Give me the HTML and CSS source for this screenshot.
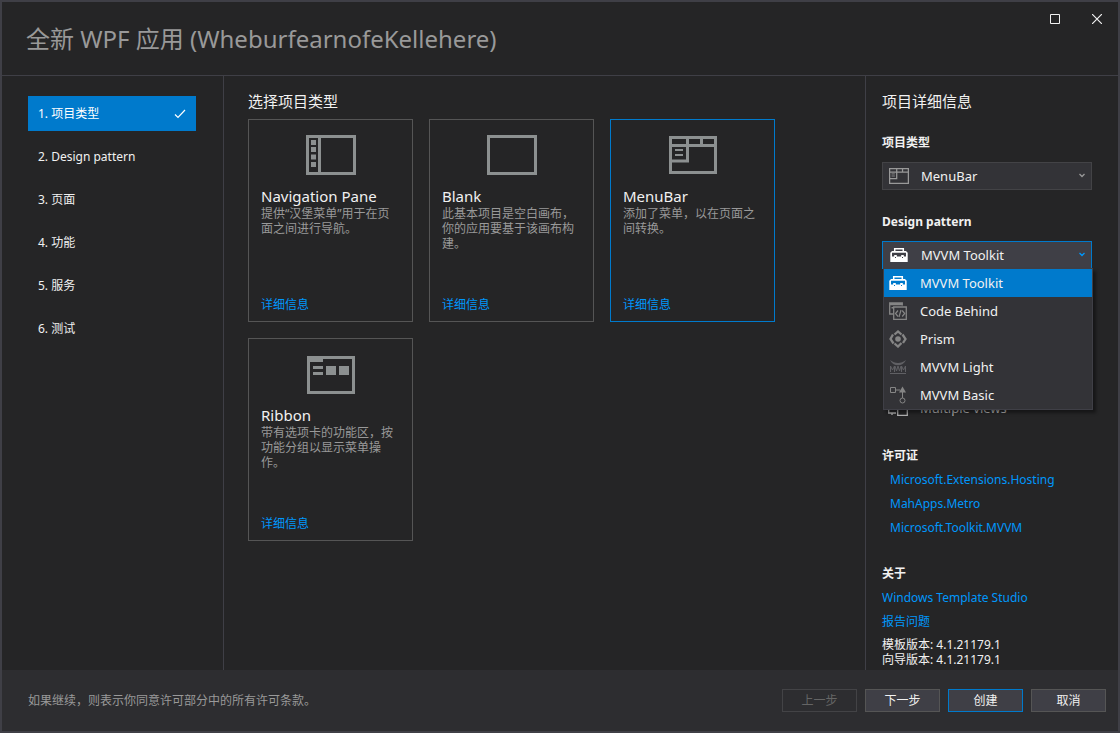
FILE: index.html
```html
<!DOCTYPE html>
<html lang="zh-CN">
<head>
<meta charset="utf-8">
<title>全新 WPF 应用</title>
<link rel="stylesheet" href="styles.css">
</head>
<body>
<svg class="sprite" aria-hidden="true">
  <symbol id="i-menubar" viewBox="0 0 48 38">
    <path d="M1.5 1.5h45v35h-45zM0 9.500h48M18.500 0v25H0M32.500 0v9" fill="none" stroke="currentColor" stroke-width="3"/>
    <path d="M6 14h8M6 19h8" stroke="currentColor" stroke-width="2"/>
  </symbol>
  <symbol id="i-toolkit" viewBox="0 0 18 16">
    <path d="M4.700 5V1.700h8.600V5" fill="none" stroke="currentColor" stroke-width="1.500"/>
    <path fill="currentColor" fill-rule="evenodd" d="M2 4h14l1.700 1.700V15H.300V5.700zM2 5.800v3.700h2.200V8h2.600v1.500h4.400V8h2.600v1.500H16V5.800zM5 10v1h1v-1zM12 10v1h1v-1z"/>
  </symbol>
</svg>
<div class="window">
  <header class="titlebar">
    <h1 class="title">全新 WPF 应用 (WheburfearnofeKellehere)</h1>
    <div class="window-buttons">
      <button class="window-button" type="button" aria-label="最大化"><svg width="10" height="10" viewBox="0 0 10 10"><path d="M.5.5h9v9h-9z" fill="none" stroke="currentColor"/></svg></button>
      <button class="window-button" type="button" aria-label="关闭"><svg width="10" height="10" viewBox="0 0 10 10"><path d="M0 0l10 10M10 0L0 10" fill="none" stroke="currentColor" stroke-width="1.2"/></svg></button>
    </div>
  </header>
  <div class="content">
    <nav class="steps">
      <a class="step step-active" href="#">1. 项目类型<svg width="12" height="10" viewBox="0 0 12 10"><path d="M1 5.500l3 3L11 1" fill="none" stroke="currentColor" stroke-width="1.2"/></svg></a>
      <a class="step" href="#">2. Design pattern</a>
      <a class="step" href="#">3. 页面</a>
      <a class="step" href="#">4. 功能</a>
      <a class="step" href="#">5. 服务</a>
      <a class="step" href="#">6. 测试</a>
    </nav>
    <main class="main">
      <h2 class="heading">选择项目类型</h2>
      <div class="cards">
        <article class="card">
          <svg class="card-icon" width="50" height="40" viewBox="0 0 50 40"><path d="M1.500 1.500h47v37h-47zM13.500 0v40" fill="none" stroke="currentColor" stroke-width="3"/><path d="M5 5h5v5H5zM5 12h5v5H5zM5 19.500h5v5H5zM5 27h5v5H5z" fill="currentColor"/></svg>
          <h3 class="card-title">Navigation Pane</h3>
          <p class="card-text">提供“汉堡菜单”用于在页面之间进行导航。</p>
          <a class="link" href="#">详细信息</a>
        </article>
        <article class="card">
          <svg class="card-icon" width="50" height="40" viewBox="0 0 50 40"><path d="M1.500 1.500h47v37h-47z" fill="none" stroke="currentColor" stroke-width="3"/></svg>
          <h3 class="card-title">Blank</h3>
          <p class="card-text">此基本项目是空白画布，你的应用要基于该画布构建。</p>
          <a class="link" href="#">详细信息</a>
        </article>
        <article class="card card-selected">
          <svg class="card-icon" width="48" height="40"><use href="#i-menubar"/></svg>
          <h3 class="card-title">MenuBar</h3>
          <p class="card-text">添加了菜单，以在页面之间转换。</p>
          <a class="link" href="#">详细信息</a>
        </article>
        <article class="card">
          <svg class="card-icon" width="48" height="40" viewBox="0 -2 48 40"><path d="M1.500 1.500h45v35h-45z" fill="none" stroke="currentColor" stroke-width="3"/><path d="M0 0h16v6H0zM6 10h10v3H6zM6 16h10v3H6zM19 10h10v9H19zM32 10h10v9H32z" fill="currentColor"/></svg>
          <h3 class="card-title">Ribbon</h3>
          <p class="card-text">带有选项卡的功能区，按功能分组以显示菜单操作。</p>
          <a class="link" href="#">详细信息</a>
        </article>
      </div>
    </main>
    <aside class="details">
      <h2 class="heading">项目详细信息</h2>
      <label class="label" for="type">项目类型</label>
      <div class="combo">
        <select class="select" id="type"><option>MenuBar</option></select>
        <svg class="combo-icon" width="20" height="16"><use href="#i-menubar"/></svg>
        <svg class="combo-arrow" width="6" height="5" viewBox="0 0 6 5"><path d="M.5 1L3 3.500 5.500 1" fill="none" stroke="currentColor" stroke-width="1.300"/></svg>
      </div>
      <label class="label label-pattern" for="pattern">Design pattern</label>
      <div class="combo combo-open">
        <select class="select" id="pattern"><option>MVVM Toolkit</option></select>
        <svg class="combo-icon" width="20" height="16"><use href="#i-toolkit"/></svg>
        <svg class="combo-arrow" width="6" height="5" viewBox="0 0 6 5"><path d="M.5 1L3 3.500 5.500 1" fill="none" stroke="currentColor" stroke-width="1.300"/></svg>
        <ul class="menu" role="listbox" aria-label="Design pattern">
          <li class="option option-active" role="option" aria-selected="true"><svg width="18" height="16"><use href="#i-toolkit"/></svg>MVVM Toolkit</li>
          <li class="option" role="option"><svg width="18" height="18" viewBox="0 0 18 18"><path d="M4 12H.7V1h12.600v2.500" fill="none" stroke="currentColor" stroke-width="1.300"/><path d="M1 1h12v2.200H1zM2.500 5h2v1.500h-2z" fill="currentColor"/><path d="M4.700 5h12.600v12.300H4.700z" fill="none" stroke="currentColor" stroke-width="1.300"/><path d="M9 8.500l-2.500 3L9 14.500M13.200 8.500l2.500 3-2.500 3M12 8l-2 7" fill="none" stroke="currentColor" stroke-width="1.200"/></svg>Code Behind</li>
          <li class="option" role="option"><svg width="18" height="18" viewBox="0 0 18 18"><path d="M5.500 4.500L9 1.500l3.500 3M13.500 4.500l3 4.500-2.500 4M12.500 13L9 16.500 5.500 13.500M4.500 13.500L1.500 9l2.500-4.500" fill="none" stroke="currentColor" stroke-width="2.300"/><circle cx="9" cy="9" r="2.800" fill="currentColor"/></svg>Prism</li>
          <li class="option" role="option"><svg class="dim" width="18" height="16" viewBox="0 0 18 16"><path d="M1 1c5 4 11 4 16 0-3 7-13 7-16 0z" fill="currentColor"/><path d="M1.500 13V7l2 4 2-4v6M6 7l1.500 5L9 7l1.500 5L12 7M12.500 13V7l2 4 2-4v6M1 14.500h16" fill="none" stroke="currentColor"/></svg>MVVM Light</li>
          <li class="option" role="option"><svg width="18" height="18" viewBox="0 0 18 18"><path d="M1.500 1.500h5v5h-5zM7 4h4M13.500 6v6" fill="none" stroke="currentColor"/><circle cx="13.500" cy="14.500" r="2.500" fill="none" stroke="currentColor"/><path d="M13.500 .500l3.500 6h-7z" fill="currentColor"/></svg>MVVM Basic</li>
        </ul>
      </div>
      <div class="feature">
        <svg width="20" height="16" viewBox="0 0 20 16"><path d="M8 13H.7V4M4 13v2M9.700 5.500h9.600v9.800H9.700zM10 5h5" fill="none" stroke="currentColor" stroke-width="1.300"/></svg>Multiple views
      </div>
      <h3 class="label">许可证</h3>
      <div class="licenses">
        <a class="link" href="#">Microsoft.Extensions.Hosting</a>
        <a class="link" href="#">MahApps.Metro</a>
        <a class="link" href="#">Microsoft.Toolkit.MVVM</a>
      </div>
      <h3 class="label">关于</h3>
      <div class="about">
        <a class="link" href="#">Windows Template Studio</a>
        <a class="link" href="#">报告问题</a>
      </div>
      <p class="version">模板版本: 4.1.21179.1<br>向导版本: 4.1.21179.1</p>
    </aside>
  </div>
  <footer class="footer">
    <p class="notice">如果继续，则表示你同意许可部分中的所有许可条款。</p>
    <button class="button" type="button" disabled>上一步</button>
    <button class="button" type="button">下一步</button>
    <button class="button button-primary" type="button">创建</button>
    <button class="button" type="button">取消</button>
  </footer>
</div>
</body>
</html>
```

FILE: styles.css
```css
* { box-sizing: border-box; }
body {
  margin: 0;
  background: #252526;
  color: #f1f1f1;
  font: 12px/16px "Noto Sans", "Noto Sans CJK SC", sans-serif;
}
h1, h2, h3, p, ul { margin: 0; padding: 0; font-weight: 400; }
button, select { font: inherit; color: inherit; }
a { text-decoration: none; color: inherit; }
svg { flex: none; }
.sprite { display: none; }
.window {
  display: flex;
  flex-direction: column;
  min-height: 100vh;
  border: 2px solid #3f3f46;
}
.titlebar {
  display: flex;
  justify-content: space-between;
  height: 74px;
  padding-left: 24px;
  border-bottom: 1px solid #3f3f46;
}
.title {
  align-self: center;
  color: #999;
  font-size: 24px;
  line-height: 32px;
}
.window-buttons { display: flex; height: 34px; }
.window-button {
  display: grid;
  place-items: center;
  width: 42px;
  padding: 0;
  border: 0;
  background: none;
}
.content { display: flex; flex: 1; }
.steps {
  display: flex;
  flex-direction: column;
  gap: 8px;
  width: 222px;
  padding: 20px 27px 0 26px;
  border-right: 1px solid #3f3f46;
}
.step {
  display: flex;
  align-items: center;
  justify-content: space-between;
  height: 35px;
  padding: 0 10px;
}
.step-active { background: #007acc; color: #fff; }
.main { flex: 1; padding: 15px 24px; }
.heading { font-size: 15px; line-height: 20px; }
.cards { display: flex; flex-wrap: wrap; gap: 16px; margin-top: 8px; }
.card {
  display: flex;
  flex-direction: column;
  width: 165px;
  height: 203px;
  padding: 15px 12px 8px;
  border: 1px solid #555;
}
.card-selected { border-color: #007acc; }
.card-icon { align-self: center; color: #8c9090; }
.card-title { margin-top: 11px; font-size: 15px; line-height: 20px; }
.card-text { color: #999; line-height: 15px; }
.card .link { margin-top: auto; }
.link { color: #0097fb; }
.details {
  display: flex;
  flex-direction: column;
  width: 253px;
  padding: 15px 26px 0 16px;
  border-left: 1px solid #3f3f46;
}
.label { margin: 24px 0 11px; font-size: 12px; font-weight: 700; }
.combo { position: relative; color: #999; }
.select {
  display: block;
  width: 100%;
  height: 28px;
  padding: 0 38px;
  border: 1px solid #434346;
  border-radius: 0;
  background: #333337;
  color: #f1f1f1;
  font-size: 13px;
  appearance: none;
}
.combo-icon { position: absolute; left: 7px; top: 6px; }
.combo-arrow { position: absolute; right: 7px; top: 11px; }
.combo-open { color: #0097fb; }
.combo-open .select { border-color: #007acc; background: #3f3f46; }
.combo-open .combo-icon { color: #fff; }
.menu {
  position: absolute;
  z-index: 1;
  left: 1px;
  right: -1px;
  top: 27px;
  border: 1px solid #3f3f46;
  background: #333337;
  box-shadow: 3px 3px 3px rgba(0, 0, 0, .4);
  color: #8c8c8c;
  list-style: none;
}
.option {
  display: flex;
  align-items: center;
  gap: 13px;
  height: 28px;
  padding-left: 5px;
  color: #f1f1f1;
  font-size: 13px;
}
.option svg { color: #858585; }
.option .dim { color: #606064; }
.option-active { background: #007acc; }
.option-active svg { color: #fff; }
.feature {
  display: flex;
  align-items: center;
  gap: 12px;
  margin-top: 131px;
  padding-left: 6px;
  color: #b0b0b0;
  font-size: 13px;
}
.feature + .label { margin: 32px 0 8px; }
.licenses, .about { display: flex; flex-direction: column; gap: 8px; }
.licenses { padding-left: 8px; }
.licenses + .label { margin: 30px 0 8px; }
.version { margin-top: 7px; line-height: 15px; }
.footer {
  display: flex;
  align-items: center;
  gap: 8px;
  height: 61px;
  padding: 0 12px 0 26px;
  background: #2d2d30;
}
.notice { flex: 1; color: #999; }
.button {
  width: 75px;
  height: 23px;
  padding: 0;
  border: 1px solid #555;
  background: #3f3f46;
}
.button:disabled { border-color: #434346; background: #2d2d30; color: #656565; }
.button-primary { border-color: #007acc; }
```
